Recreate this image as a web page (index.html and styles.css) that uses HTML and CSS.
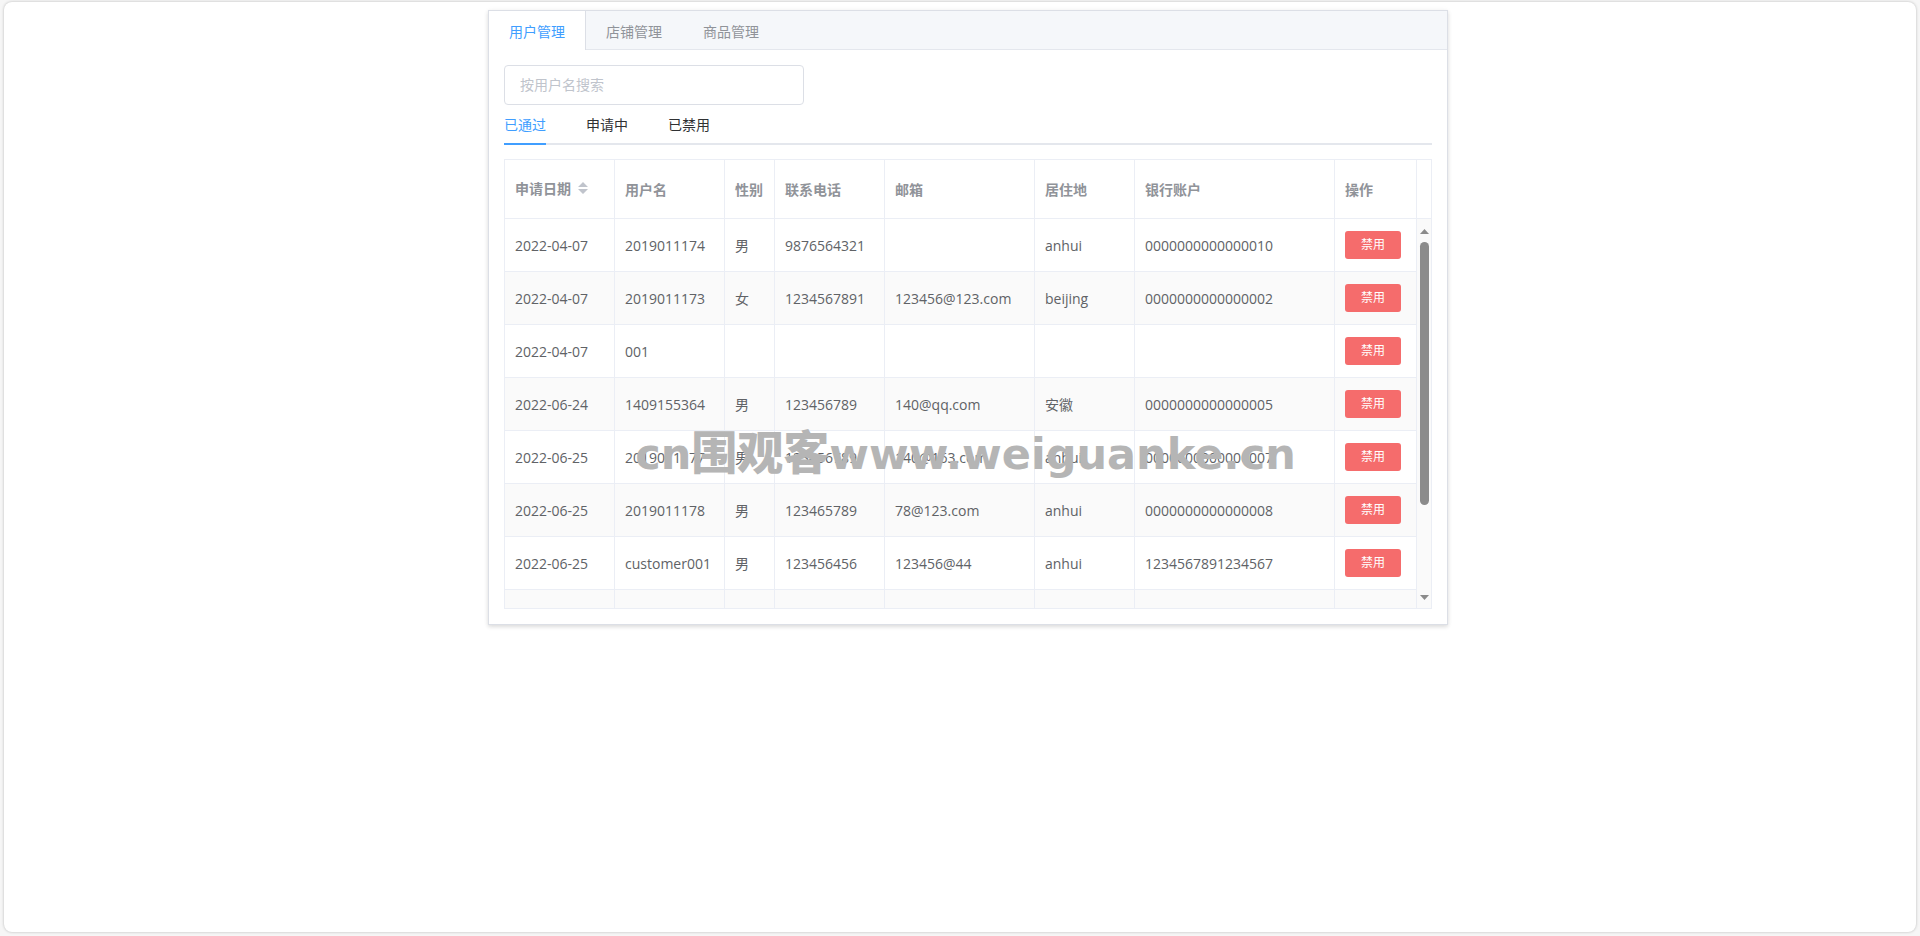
FILE: index.html
```html
<!DOCTYPE html>
<html lang="zh-CN">
<head>
<meta charset="utf-8">
<title>用户管理</title>
<link rel="stylesheet" href="styles.css">
</head>
<body>
<main class="page">
  <section class="card">
    <nav class="card-tabs">
      <button class="card-tab active" type="button">用户管理</button>
      <button class="card-tab" type="button">店铺管理</button>
      <button class="card-tab" type="button">商品管理</button>
    </nav>
    <div class="card-body">
      <input class="search" type="text" placeholder="按用户名搜索" aria-label="按用户名搜索">
      <nav class="line-tabs">
        <button class="line-tab active" type="button">已通过</button>
        <button class="line-tab" type="button">申请中</button>
        <button class="line-tab" type="button">已禁用</button>
      </nav>
      <div class="table-box">
        <table class="table">
          <colgroup>
            <col class="w-date"><col class="w-name"><col class="w-sex"><col class="w-phone"><col class="w-mail"><col class="w-place"><col class="w-bank"><col>
          </colgroup>
          <thead>
            <tr>
              <th><span class="sortable">申请日期<svg class="caret" viewBox="0 0 10 12" aria-hidden="true"><path d="M0 5L5 0L10 5ZM0 7L5 12L10 7Z"/></svg></span></th>
              <th>用户名</th><th>性别</th><th>联系电话</th><th>邮箱</th><th>居住地</th><th>银行账户</th><th>操作</th>
            </tr>
          </thead>
          <tbody>
            <tr><td>2022-04-07</td><td>2019011174</td><td>男</td><td>9876564321</td><td></td><td>anhui</td><td>0000000000000010</td><td><button class="ban" type="button">禁用</button></td></tr>
            <tr><td>2022-04-07</td><td>2019011173</td><td>女</td><td>1234567891</td><td>123456@123.com</td><td>beijing</td><td>0000000000000002</td><td><button class="ban" type="button">禁用</button></td></tr>
            <tr><td>2022-04-07</td><td>001</td><td></td><td></td><td></td><td></td><td></td><td><button class="ban" type="button">禁用</button></td></tr>
            <tr><td>2022-06-24</td><td>1409155364</td><td>男</td><td>123456789</td><td>140@qq.com</td><td>安徽</td><td>0000000000000005</td><td><button class="ban" type="button">禁用</button></td></tr>
            <tr><td>2022-06-25</td><td>2019011177</td><td>男</td><td>123456789</td><td>140@163.com</td><td>anhui</td><td>0000000000000007</td><td><button class="ban" type="button">禁用</button></td></tr>
            <tr><td>2022-06-25</td><td>2019011178</td><td>男</td><td>123465789</td><td>78@123.com</td><td>anhui</td><td>0000000000000008</td><td><button class="ban" type="button">禁用</button></td></tr>
            <tr><td>2022-06-25</td><td>customer001</td><td>男</td><td>123456456</td><td>123456@44</td><td>anhui</td><td>1234567891234567</td><td><button class="ban" type="button">禁用</button></td></tr>
            <tr><td></td><td></td><td></td><td></td><td></td><td></td><td></td><td></td></tr>
          </tbody>
        </table>
        <div class="gutter">
          <div class="gutter-head"></div>
          <div class="track">
            <svg class="arrow" viewBox="0 0 9 5" aria-hidden="true"><path d="M0 5L4.500 0L9 5Z"/></svg>
            <div class="rail"><div class="thumb"></div></div>
            <svg class="arrow" viewBox="0 0 9 5" aria-hidden="true"><path d="M0 0L4.500 5L9 0Z"/></svg>
          </div>
        </div>
      </div>
    </div>
  </section>
  <div class="watermark">cn<span class="watermark-han">围观客</span>www.weiguanke.cn</div>
</main>
</body>
</html>
```
FILE: styles.css
```css
* { box-sizing: border-box; }
body {
  margin: 0;
  padding: 2px 4px 4px;
  min-height: 100vh;
  display: flex;
  background: #f6f6f6;
  color: #606266;
  font-family: "Open Sans", "Noto Sans CJK SC", sans-serif;
  font-size: 14px;
}
button, input { font: inherit; margin: 0; }
button { border: 0; padding: 0; background: none; cursor: pointer; }
.page {
  position: relative;
  flex: 1;
  padding: 8px 0 8px 16px;
  background: #fff;
  border-radius: 8px;
  box-shadow: 0 0 3px rgba(0, 0, 0, .25);
}
.card {
  max-width: 960px;
  margin: 0 auto;
  background: #fff;
  border: 1px solid #dcdfe6;
  box-shadow: 0 2px 4px rgba(0, 0, 0, .12), 0 0 6px rgba(0, 0, 0, .04);
}
.card-tabs {
  display: flex;
  height: 39px;
  background: #f5f7fa;
  border-bottom: 1px solid #e4e7ed;
}
.card-tab {
  height: 39px;
  padding: 0 20px;
  border-right: 1px solid transparent;
  color: #909399;
}
.card-tab.active {
  color: #409eff;
  background: #fff;
  border-right-color: #dcdfe6;
}
.card-body { padding: 15px; }
.search {
  display: block;
  width: 300px;
  height: 40px;
  padding: 0 15px 2px;
  border: 1px solid #dcdfe6;
  border-radius: 4px;
  outline: none;
  color: #606266;
}
.search::placeholder { color: #c0c4cc; opacity: 1; }
.line-tabs {
  display: flex;
  gap: 40px;
  height: 40px;
  margin-bottom: 14px;
  border-bottom: 2px solid #e4e7ed;
}
.line-tab {
  height: 40px;
  color: #303133;
  border-bottom: 2px solid transparent;
}
.line-tab.active { color: #409eff; border-color: #409eff; }
.table-box {
  display: flex;
  height: 450px;
  overflow: hidden;
  border: 1px solid #ebeef5;
}
.table {
  flex: 1;
  min-width: 0;
  table-layout: fixed;
  border-collapse: separate;
  border-spacing: 0;
}
.w-date, .w-name, .w-phone { width: 110px; }
.w-sex { width: 50px; }
.w-mail { width: 150px; }
.w-place { width: 100px; }
.w-bank { width: 200px; }
th, td {
  padding: 0 0 0 10px;
  border-right: 1px solid #ebeef5;
  border-bottom: 1px solid #ebeef5;
  text-align: left;
  white-space: nowrap;
}
th {
  height: 59px;
  color: #909399;
  font-weight: 700;
}
td { height: 53px; }
tbody tr:nth-child(even) { background: #fafafa; }
.sortable {
  display: flex;
  align-items: center;
  gap: 7px;
  padding-bottom: 3px;
}
.caret { width: 10px; height: 12px; fill: #c0c4cc; }
.ban {
  display: block;
  width: 56px;
  height: 28px;
  padding-bottom: 2px;
  border-radius: 3px;
  background: #f56c6c;
  color: #fff;
  font-size: 12px;
}
.gutter {
  width: 14px;
  display: flex;
  flex-direction: column;
}
.gutter-head { height: 59px; border-bottom: 1px solid #ebeef5; }
.track {
  flex: 1;
  display: flex;
  flex-direction: column;
  align-items: center;
  padding: 10px 0 8px;
  background: #fafafa;
}
.arrow { width: 9px; height: 5px; fill: #8b8b8b; }
.rail { flex: 1; padding: 8px 0; }
.thumb { width: 9px; height: 263px; border-radius: 5px; background: #8b8b8b; }
.watermark {
  position: absolute;
  left: 0;
  right: 0;
  top: 421px;
  padding-left: 11px;
  text-align: center;
  font: 700 43px/60px "DejaVu Sans", "Noto Sans CJK SC", sans-serif;
  color: #b5b5b5;
  pointer-events: none;
}
.watermark-han { font-size: 46px; font-weight: 900; }
```
